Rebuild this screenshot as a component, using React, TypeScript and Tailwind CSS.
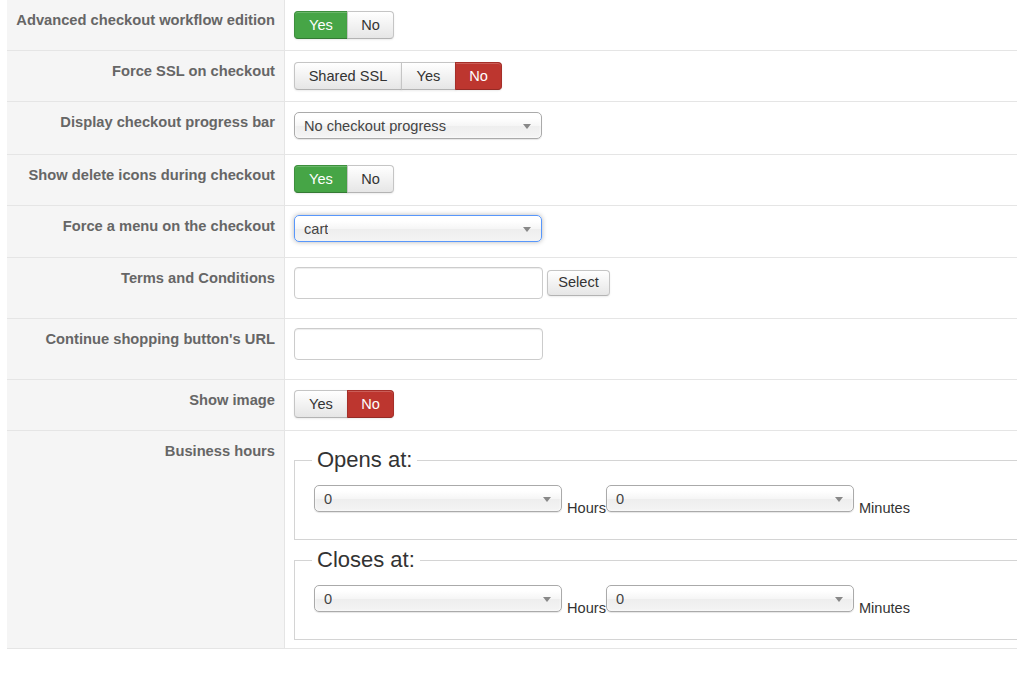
import type { ReactNode } from 'react';

type Tone = 'default' | 'success' | 'danger';

const toneClass: Record<Tone, string> = {
  default:
    'bg-gradient-to-b from-white to-[#e6e6e6] text-[#333] border-[#c5c5c5] border-b-[#b3b3b3]',
  success: 'bg-[#46a546] text-white border-[#3d8f3d] border-b-[#347a34]',
  danger: 'bg-[#bd362f] text-white border-[#a52f29] border-b-[#942a25]',
};

interface Choice {
  label: string;
  width: string;
  tone?: Tone;
}

function ButtonGroup({ items }: { items: Choice[] }) {
  return (
    <div className="flex">
      {items.map((item, i) => (
        <button
          key={item.label}
          className={[
            'h-[28px] border flex items-center justify-center pt-[1px] text-[14.6px] leading-none shadow-[inset_0_1px_0_rgba(255,255,255,0.2),0_1px_2px_rgba(0,0,0,0.08)]',
            item.width,
            toneClass[item.tone ?? 'default'],
            i === 0 ? 'rounded-l-[4px]' : '-ml-px',
            i === items.length - 1 ? 'rounded-r-[4px]' : '',
          ].join(' ')}
        >
          {item.label}
        </button>
      ))}
    </div>
  );
}

function Dropdown({ value, focused }: { value: string; focused?: boolean }) {
  return (
    <div
      className={[
        'relative w-[248px] h-[27px] rounded-[5px] border flex items-center pl-[9px] pt-[2px] text-[14.6px] text-[#444]',
        'bg-[linear-gradient(to_bottom,#ffffff_20%,#f6f6f6_50%,#eeeeee_52%,#f4f4f4_100%)]',
        focused
          ? 'border-[#5897fb] shadow-[0_0_5px_rgba(0,0,0,0.3)]'
          : 'border-[#aaa] shadow-[inset_0_0_3px_#fff,0_1px_1px_rgba(0,0,0,0.1)]',
      ].join(' ')}
    >
      <span className="truncate">{value}</span>
      <span className="absolute right-[10px] top-[11px] w-0 h-0 border-x-[4px] border-x-transparent border-t-[5px] border-t-[#888]" />
    </div>
  );
}

function TextInput() {
  return (
    <div className="w-[249px] h-[32px] rounded-[4px] border border-[#ccc] bg-white shadow-[inset_0_1px_1px_rgba(0,0,0,0.075)]" />
  );
}

function TimePicker({ legend }: { legend: string }) {
  return (
    <fieldset className="w-[760px] border border-[#d4d4d4] pl-[17px] pt-[14px] pb-[27px]">
      <legend className="px-[5px] text-[22px] leading-[22px] text-[#333]">{legend}</legend>
      <div className="flex items-end ml-[2px]">
        <Dropdown value="0" />
        <span className="text-[14.6px] leading-[16px] text-[#333] ml-[5px] mb-[-4px]">Hours</span>
        <Dropdown value="0" />
        <span className="text-[14.6px] leading-[16px] text-[#333] ml-[5px] mb-[-4px]">Minutes</span>
      </div>
    </fieldset>
  );
}

interface RowProps {
  label: string;
  height: string;
  pad: string;
  children: ReactNode;
}

function Row({ label, height, pad, children }: RowProps) {
  return (
    <div className={`flex border-b border-[#e5e5e5] ${height}`}>
      <div className="w-[278px] shrink-0 bg-[#f5f5f5] border-r border-[#e5e5e5] pt-[8px] pr-[9px] text-right">
        <span className="text-[14.7px] leading-[20px] font-bold text-[#666]">{label}</span>
      </div>
      <div className={`flex-1 min-w-0 overflow-hidden pl-[9px] ${pad}`}>{children}</div>
    </div>
  );
}

export default function App() {
  return (
    <div className="w-full min-h-[686px] bg-white overflow-hidden pl-[7px] font-['Liberation_Sans',Arial,sans-serif]">
      <Row label="Advanced checkout workflow edition" height="h-[51px]" pad="pt-[11px]">
        <ButtonGroup
          items={[
            { label: 'Yes', width: 'w-[54px]', tone: 'success' },
            { label: 'No', width: 'w-[47px]' },
          ]}
        />
      </Row>
      <Row label="Force SSL on checkout" height="h-[51px]" pad="pt-[11px]">
        <ButtonGroup
          items={[
            { label: 'Shared SSL', width: 'w-[108px]' },
            { label: 'Yes', width: 'w-[55px]' },
            { label: 'No', width: 'w-[47px]', tone: 'danger' },
          ]}
        />
      </Row>
      <Row label="Display checkout progress bar" height="h-[53px]" pad="pt-[10px]">
        <Dropdown value="No checkout progress" />
      </Row>
      <Row label="Show delete icons during checkout" height="h-[51px]" pad="pt-[10px]">
        <ButtonGroup
          items={[
            { label: 'Yes', width: 'w-[54px]', tone: 'success' },
            { label: 'No', width: 'w-[47px]' },
          ]}
        />
      </Row>
      <Row label="Force a menu on the checkout" height="h-[52px]" pad="pt-[9px]">
        <Dropdown value="cart" focused />
      </Row>
      <Row label="Terms and Conditions" height="h-[61px]" pad="pt-[9px]">
        <div className="flex items-start gap-[4px]">
          <TextInput />
          <button className="mt-[3px] w-[63px] h-[26px] rounded-[4px] border border-[#c5c5c5] border-b-[#b3b3b3] bg-gradient-to-b from-white to-[#e6e6e6] text-[14.6px] text-[#333] shadow-[0_1px_2px_rgba(0,0,0,0.08)]">
            Select
          </button>
        </div>
      </Row>
      <Row label="Continue shopping button's URL" height="h-[61px]" pad="pt-[9px]">
        <TextInput />
      </Row>
      <Row label="Show image" height="h-[51px]" pad="pt-[10px]">
        <ButtonGroup
          items={[
            { label: 'Yes', width: 'w-[54px]' },
            { label: 'No', width: 'w-[47px]', tone: 'danger' },
          ]}
        />
      </Row>
      <Row label="Business hours" height="h-[218px]" pad="pt-[18px]">
        <div className="flex flex-col gap-[9px]">
          <TimePicker legend="Opens at:" />
          <TimePicker legend="Closes at:" />
        </div>
      </Row>
    </div>
  );
}
